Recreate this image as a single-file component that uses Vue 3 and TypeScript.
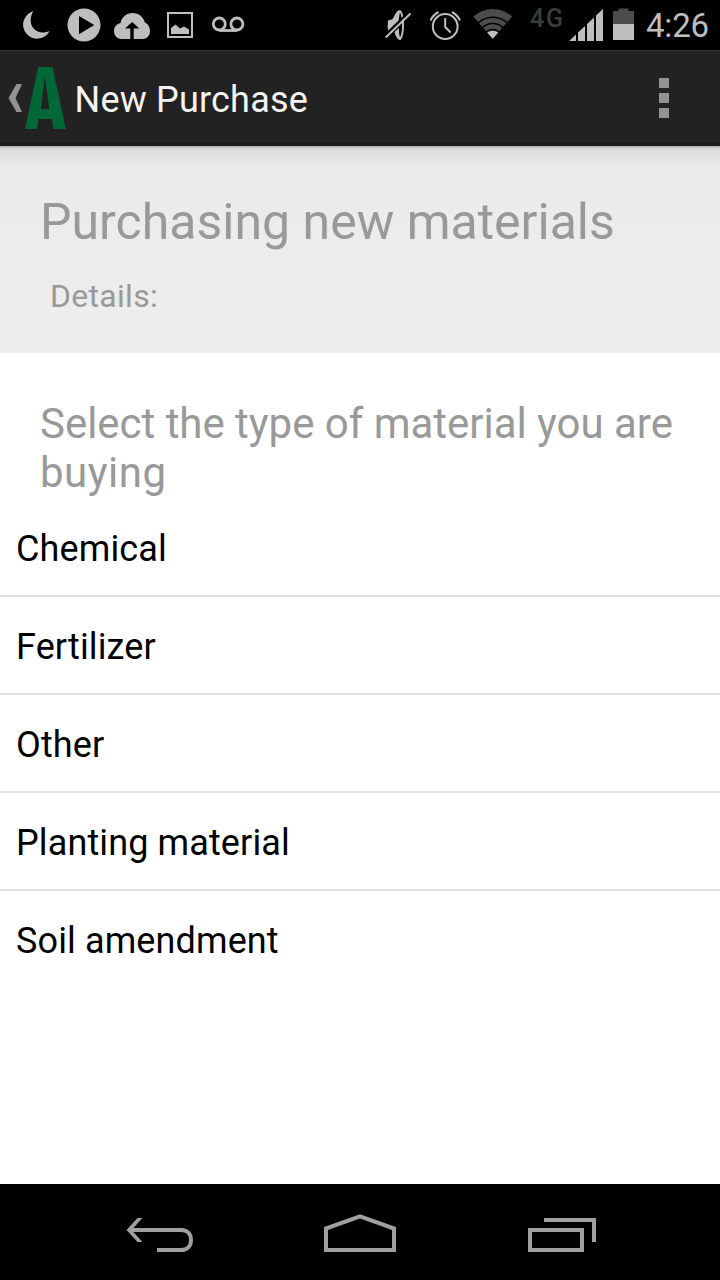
<script setup lang="ts">
const materials: string[] = ['Chemical', 'Fertilizer', 'Other', 'Planting material', 'Soil amendment']
</script>

<template>
  <div class="screen">
    <header class="status">
      <div class="notifications">
        <svg class="cell" viewBox="12 0 48 50"><path fill="#bebebe" d="M33.3 11.2A14 14 0 1 0 49.6 31C39 35.500 30.500 29 30.700 20.500C30.700 17 31.500 14 33.300 11.200Z" /></svg>
        <svg class="cell" viewBox="60 0 48 50"><path fill="#bebebe" fill-rule="evenodd" d="M84 8.500a16.500 16.500 0 1 1 0 33a16.500 16.500 0 0 1 0-33ZM79 16v18.300l15.300-9.200Z" /></svg>
        <svg class="cell" viewBox="108 0 48 50">
          <path fill="#bebebe" d="M121.500 39a7.500 7.500 0 0 1-7.500-8c0-4.500 3-7 6.500-8c1-5.500 5.500-10 12-10c6.300 0 11 4 12.300 9.500c3.200 1.200 5.200 4.500 5.200 8.500a7.500 7.500 0 0 1-7.500 8Z" />
          <path d="M130.300 39v-10.500h-5.300l7.200-6.500l7.200 6.500h-5.700V39Z" />
        </svg>
        <svg class="cell" viewBox="156 0 48 50">
          <rect x="168" y="13" width="24" height="24" fill="none" stroke="#bebebe" stroke-width="2" />
          <path fill="#bebebe" d="M171 34v-6l4.500-3.500l4.500 4l4-2l5 3V34Z" />
        </svg>
        <svg class="cell" viewBox="204 0 48 50"><g fill="none" stroke="#bebebe" stroke-width="2.800"><circle cx="219.300" cy="24" r="6" /><circle cx="236.900" cy="24" r="6" /><path d="M219.300 30.500h17.600" /></g></svg>
      </div>
      <div class="system">
        <svg class="cell" viewBox="373 0 48 50">
          <path fill="#bebebe" d="M388 20.500l4.500-1.200l4-7.300q1.500-2 4-2l-1 4.500q-.8 4-.8 8L388.500 33q-1.500-6-.5-12.500Z" />
          <path fill="none" stroke="#bebebe" stroke-width="2" d="M400 11q3 3 3 14t-3 14q-2 0-3.500-5.500" />
          <path fill="#bebebe" d="M394.500 32l4.200-4q.1 6 1.800 11.800q-4.500-1-6-7.800Z" />
          <path stroke="#000" stroke-width="2" d="M384.500 35.500L409.500 11.500" />
          <path stroke="#bebebe" stroke-width="2" d="M385.700 37.500L410.500 13.500" />
        </svg>
        <svg class="cell" viewBox="421 0 48 50"><g fill="none" stroke="#bebebe" stroke-width="2"><circle cx="445.200" cy="26.500" r="12.400" /><path d="M445.200 18v9l5.500 5.500M430.500 20.500q2.500-5.500 8-8.500M460 20.500q-2.500-5.500-8-8.500" /></g></svg>
        <svg class="cell" viewBox="469 0 48 50">
          <path fill="#4c4c4c" d="M473.300 16.500a29 29 0 0 1 38.900 0L492.700 38.700Z" />
          <path fill="#bebebe" d="M486.900 32.300q5.800-3.300 11.600 0l-5.800 6.400Z" />
          <g fill="none" stroke="#000" stroke-width="1.500"><circle cx="492.700" cy="39" r="21.800" /><circle cx="492.700" cy="39" r="15.600" /><circle cx="492.700" cy="39" r="9.400" /></g>
        </svg>
        <span class="network">4G</span>
        <svg class="signal" viewBox="568 0 36 50"><path fill="#bebebe" d="M569 41l7-6.600V41ZM578 32.500l7-6.600V41h-7ZM587 24l7-6.600V41h-7ZM596 15.600l7-6.600V41h-7Z" /></svg>
        <svg class="battery" viewBox="612 0 24 50"><path fill="#4c4c4c" d="M613 11h5.500V8.500h10V11H634v13h-21Z" /><path fill="#bebebe" d="M613 24h21v16h-21Z" /></svg>
        <span class="clock">4:26</span>
      </div>
    </header>

    <div class="bar">
      <svg class="up" viewBox="0 0 24 96"><path fill="#929292" d="M16.500 34H22l-6.500 14L22 62h-5.500L8.500 48Z" /></svg>
      <svg class="logo" viewBox="24 50 44 96"><path fill="#006837" fill-rule="evenodd" d="M38.300 67h14.200L65.800 129H53.400L52 119H38.300L37 129H25ZM44.700 76L41 109h8.300Z" /></svg>
      <h1>New Purchase</h1>
      <button class="more" aria-label="More options"><i></i><i></i><i></i></button>
    </div>

    <section class="summary">
      <h2>Purchasing new materials</h2>
      <p>Details:</p>
    </section>

    <main>
      <h3>Select the type of material you are buying</h3>
      <ul><li v-for="material in materials" :key="material"><span>{{ material }}</span></li></ul>
    </main>

    <nav>
      <svg viewBox="0 0 720 96" fill="none" stroke="#a0a0a0" stroke-width="4">
        <path d="M129 46H181C187 46 191 50 191 56S187 66 181 66H157" />
        <path fill="#a0a0a0" stroke="none" d="M126.500 46L137.500 34H142.500L131.500 46L142.500 58H137.500Z" />
        <path d="M326 66V44.500L360 32.300L394 44.500V66Z" />
        <path d="M530 46h52v20h-52ZM544 36h50v22" />
      </svg>
    </nav>
  </div>
</template>

<style>
body { margin: 0; background: #fff; }
</style>

<style scoped>
.screen { width: 720px; height: 1280px; display: flex; flex-direction: column; overflow: hidden; background: #fff; font-family: Roboto, "Liberation Sans", sans-serif; }
h1, h2, h3, p, ul { margin: 0; padding: 0; font-weight: 400; }
svg { display: block; flex: none; }
.status { height: 50px; flex: none; background: #000; display: flex; justify-content: space-between; }
.notifications { display: flex; padding-left: 12px; }
.system { display: flex; width: 347px; }
.cell { width: 48px; height: 50px; }
.network { width: 38px; margin-left: 13px; color: #3c3c3c; font-size: 25px; font-weight: 500; letter-spacing: 1.8px; line-height: 38px; white-space: nowrap; }
.signal { width: 36px; height: 50px; }
.battery { width: 24px; height: 50px; margin-left: 8px; }
.clock { margin-left: 10px; color: #bebebe; font-size: 33px; letter-spacing: -0.2px; line-height: 52px; white-space: nowrap; }
.bar { height: 96px; flex: none; box-sizing: border-box; background: linear-gradient(#303030 0 1px, #222 1px 93px, #1a1a1a 93px); display: flex; align-items: center; }
.up { width: 24px; height: 96px; }
.logo { width: 44px; height: 96px; }
h1 { margin-left: 6.5px; padding-top: 4px; color: #f3f3f3; font-size: 36px; letter-spacing: 0.2px; line-height: 98px; flex: 1; }
.more { width: 112px; height: 96px; padding: 0; border: 0; background: none; display: flex; flex-direction: column; gap: 5px; align-items: center; justify-content: center; }
.more i { width: 10px; height: 10px; background: #929292; }
.summary { height: 207px; flex: none; box-sizing: border-box; padding: 47px 40px 0; background: linear-gradient(#aaa 0, #cfcfcf 2px, #dcdcdc 4px, #e2e2e2 9px, transparent 20px), linear-gradient(#eaeaea, #eee); color: #999; }
h2 { font-size: 50px; line-height: 59px; white-space: nowrap; }
.summary p { margin: 25px 0 0 10px; font-size: 32px; letter-spacing: 0.3px; line-height: 38px; }
main { flex: 1; }
h3 { padding: 46px 40px 0; color: #999; font-size: 42px; letter-spacing: 0.5px; line-height: 49px; height: 98px; }
h3::first-line { letter-spacing: -0.03px; }
ul { padding-top: 2px; list-style: none; }
li { height: 92px; padding: 4px 0 0 16px; border-bottom: 2px solid #e2e2e2; display: flex; align-items: center; font-size: 36px; letter-spacing: 0.12px; color: #000; }
li:last-child { border-bottom: 0; }
nav { height: 96px; flex: none; background: #000; }
nav svg { width: 720px; height: 96px; }
</style>
